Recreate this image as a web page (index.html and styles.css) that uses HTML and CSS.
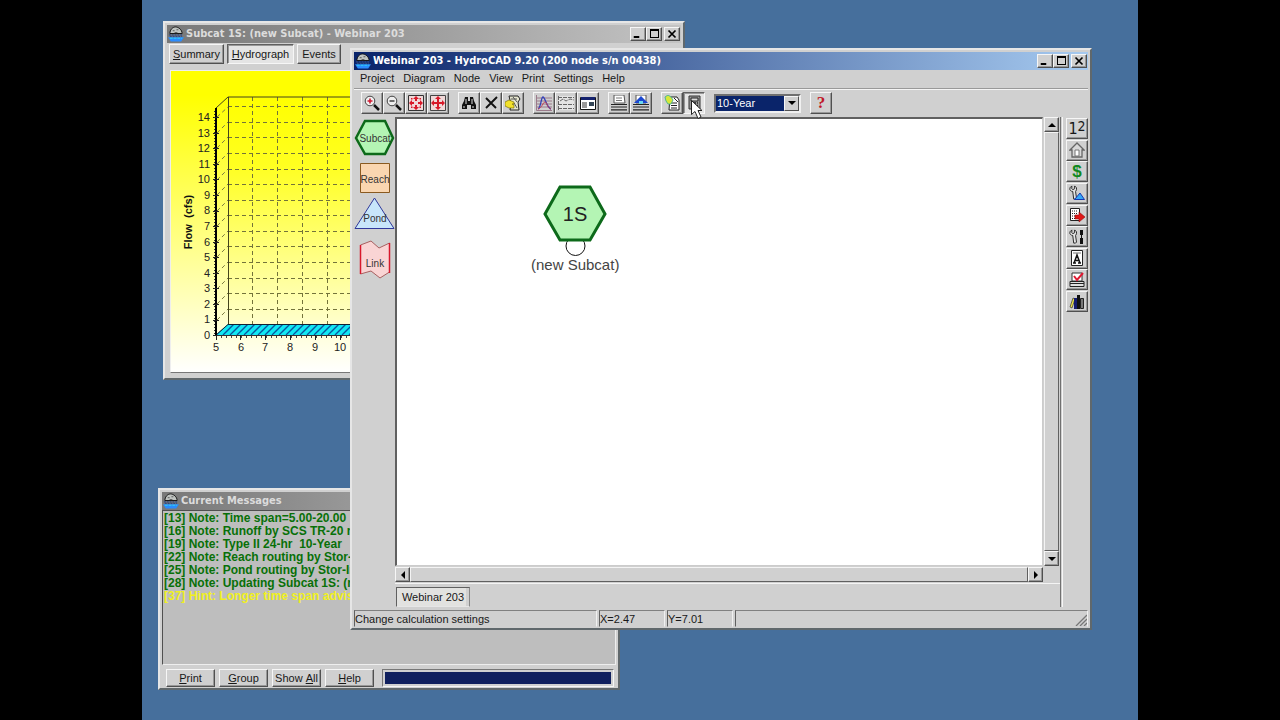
FILE: index.html
```html
<!DOCTYPE html>
<html lang="en">
<head>
<meta charset="utf-8">
<title>Webinar 203 - HydroCAD 9.20</title>
<link rel="stylesheet" href="styles.css">
</head>
<body>
<svg class="defs" aria-hidden="true">
  <symbol id="bowl" viewBox="0 0 17 17">
    <path d="M2 8C2 4 5 1 8 1s7 3 7 7z" fill="#bfc3c0" stroke="#111"/>
    <path d="M5 5h2M9 4h2M7 7h3" stroke="#555"/>
    <path d="M1 9.500h15M2 11h13" stroke="#334a80" stroke-width="1.300" stroke-dasharray="2 1"/>
    <path d="M0 12h17l-3 4.500H3z" fill="#2b8cff"/>
    <path d="M2 13h13" stroke="#30d8f0" stroke-dasharray="3 1"/>
  </symbol>
  <symbol id="min" viewBox="0 0 12 10"><path d="M2 7.500h5v1h-5z" fill="#000" stroke="#000"/></symbol>
  <symbol id="max" viewBox="0 0 12 10"><path d="M2.500 1v8M10.500 1v8M2 8.500h9" stroke="#000" fill="none"/><path d="M2 0h9v2H2z"/></symbol>
  <symbol id="close" viewBox="0 0 12 10"><path d="M2.500 1.500l7 7M9.500 1.500l-7 7" stroke="#000" stroke-width="1.700"/></symbol>
  <symbol id="wrench" viewBox="0 0 16 16"><path d="M3 1L1 3v2l2 2h1l1 8h2l1-1-1-7 1-2V3L6 1v3L4 5 3 4z" fill="#e4e4e4" stroke="#222"/></symbol>
</svg>

<main class="desktop">

  <section class="window chart-window" aria-label="Subcat 1S">
    <header class="title inactive">
      <svg class="app-icon"><use href="#bowl"/></svg>
      <h2>Subcat 1S: (new Subcat) - Webinar 203</h2>
      <div class="winbtns">
        <button aria-label="Minimize"><svg><use href="#min"/></svg></button>
        <button aria-label="Maximize"><svg><use href="#max"/></svg></button>
        <button class="x" aria-label="Close"><svg><use href="#close"/></svg></button>
      </div>
    </header>
    <nav class="tabs">
      <button class="tab-summary"><u>S</u>ummary</button>
      <button class="tab-hydro pressed"><u>H</u>ydrograph</button>
      <button class="tab-events">Events</button>
    </nav>
    <div class="chart">
      <svg width="508" height="302" viewBox="0 0 508 302" role="img" aria-label="Hydrograph, flow in cfs">
        <defs>
          <linearGradient id="sun" x1="0" y1="0" x2="0" y2="1">
            <stop offset="0.080" stop-color="#ffff00"/><stop offset="1" stop-color="#ffffff"/>
          </linearGradient>
          <linearGradient id="wall" x1="0" y1="0" x2="0" y2="1">
            <stop offset="0" stop-color="#ffff00"/><stop offset="0.300" stop-color="#ffff20"/><stop offset="1" stop-color="#ffffcc"/>
          </linearGradient>
          <pattern id="hatch" width="7" height="11" patternUnits="userSpaceOnUse" patternTransform="translate(0 253)">
            <path d="M-4 11L7 0M3 11L14 0M-11 11L0 0" stroke="#0757a0" stroke-width="1.300"/>
          </pattern>
        </defs>
        <rect width="508" height="302" fill="url(#sun)"/>
        <path d="M57 26H500V253H57z" fill="url(#wall)"/>
        <path d="M45 264L57 253H500V264z" fill="#10e8f4"/>
        <path d="M45 264L57 253H500V264z" fill="url(#hatch)"/>
        <path d="M57 35.500H500M57 51.500H500M57 66.500H500M57 82.500H500M57 98.500H500M57 113.500H500M57 129.500H500M57 144.500H500M57 160.500H500M57 175.500H500M57 191.500H500M57 207.500H500M57 222.500H500M57 238.500H500M81.500 26V253M106.500 26V253M131.500 26V253M156.500 26V253" stroke="#73733a" stroke-dasharray="4 3"/>
        <path d="M46 46l11-10M46 62l11-11M46 77l11-11M46 93l11-11M46 109l11-11M46 124l11-11M46 140l11-11M46 155l11-11M46 171l11-11M46 186l11-11M46 202l11-11M46 218l11-11M46 233l11-11M46 249l11-11" stroke="#7c7c40" stroke-dasharray="4 3"/>
        <path d="M45 37L57 26H500M57.500 26V253" fill="none" stroke="#44441c"/>
        <path d="M45 264L57 253.500H500" fill="none" stroke="#123"/>
        <path d="M45 264.500H500" stroke="#333"/>
        <path d="M45 37V265" stroke="#000" stroke-width="2"/>
        <path d="M42 46.500h6M42 62.500h6M42 77.500h6M42 93.500h6M42 108.500h6M42 124.500h6M42 140.500h6M42 155.500h6M42 171.500h6M42 186.500h6M42 202.500h6M42 217.500h6M42 233.500h6M42 249.500h6M42 264.500h4" stroke="#222"/>
        <path d="M43.500 40V264" stroke="#333" stroke-dasharray="1 2"/>
        <path d="M50 266H500" stroke="#444" stroke-width="2" stroke-dasharray="1 4"/>
        <path d="M45.500 264v5M69.500 264v5M94.500 264v5M119.500 264v5M144.500 264v5M169.500 264v5" stroke="#222"/>
        <g class="ticks" text-anchor="end">
          <text x="39" y="50">14</text><text x="39" y="66">13</text><text x="39" y="81">12</text><text x="39" y="97">11</text><text x="39" y="112">10</text><text x="39" y="128">9</text><text x="39" y="143">8</text><text x="39" y="159">7</text><text x="39" y="175">6</text><text x="39" y="190">5</text><text x="39" y="206">4</text><text x="39" y="221">3</text><text x="39" y="237">2</text><text x="39" y="252">1</text><text x="39" y="268">0</text>
        </g>
        <g class="ticks" text-anchor="middle">
          <text x="45" y="280">5</text><text x="70" y="280">6</text><text x="94" y="280">7</text><text x="119" y="280">8</text><text x="144" y="280">9</text><text x="169" y="280">10</text>
        </g>
        <text class="axis" text-anchor="middle" transform="translate(21 151) rotate(-90)">Flow&#160; (cfs)</text>
      </svg>
    </div>
  </section>

  <section class="window messages-window" aria-label="Current Messages">
    <header class="title inactive">
      <svg class="app-icon"><use href="#bowl"/></svg>
      <h2>Current Messages</h2>
    </header>
    <ul class="messages">
      <li>[13] Note: Time span=5.00-20.00</li>
      <li>[16] Note: Runoff by SCS TR-20 m</li>
      <li>[19] Note: Type II 24-hr&#160; 10-Year</li>
      <li>[22] Note: Reach routing by Stor-In</li>
      <li>[25] Note: Pond routing by Stor-In</li>
      <li>[28] Note: Updating Subcat 1S: (n</li>
      <li class="hint">[37] Hint: Longer time span adviso</li>
    </ul>
    <footer class="msg-actions">
      <button><u>P</u>rint</button>
      <button><u>G</u>roup</button>
      <button>Show&#160;<u>A</u>ll</button>
      <button><u>H</u>elp</button>
      <progress value="1" max="1" aria-label="Progress"></progress>
    </footer>
  </section>

  <section class="window app-window" aria-label="HydroCAD">
    <header class="title active">
      <svg class="app-icon"><use href="#bowl"/></svg>
      <h1>Webinar 203 - HydroCAD 9.20 (200 node s/n 00438)</h1>
      <div class="winbtns">
        <button aria-label="Minimize"><svg><use href="#min"/></svg></button>
        <button aria-label="Maximize"><svg><use href="#max"/></svg></button>
        <button class="x" aria-label="Close"><svg><use href="#close"/></svg></button>
      </div>
    </header>
    <nav class="menu">
      <button>Project</button><button>Diagram</button><button>Node</button><button>View</button><button>Print</button><button>Settings</button><button>Help</button>
    </nav>
    <div class="toolbar">
      <div class="group">
        <button aria-label="Zoom in"><svg viewBox="0 0 16 16"><path d="M10 10l5 5" stroke="#111" stroke-width="2.500"/><circle cx="6" cy="6" r="4.800" fill="#eee" stroke="#444"/><path d="M3.500 6h5M6 3.500v5" stroke="#d01830" stroke-width="1.600"/></svg></button>
        <button aria-label="Zoom out"><svg viewBox="0 0 16 16"><path d="M10 10l5 5" stroke="#111" stroke-width="2.500"/><circle cx="6" cy="6" r="4.800" fill="#eee" stroke="#444"/><path d="M3.500 6h5" stroke="#333" stroke-width="1.400"/></svg></button>
        <button aria-label="Fit diagram"><svg viewBox="0 0 16 16"><path d="M.5.5h15v15H.5z" fill="#f0d8d8" stroke="#333"/><path d="M8 1l3 3H9v2H7V4H5zM8 15l3-3H9v-2H7v2H5zM1 8l3-3v2h2v2H4v2zM15 8l-3-3v2h-2v2h2v2z" fill="#d81828"/><path d="M3 3h1.500v1.500H3zM11.500 3H13v1.500h-1.500zM3 11.500h1.500V13H3zM11.500 11.500H13V13h-1.500z" fill="#d81828"/></svg></button>
        <button aria-label="Pan diagram"><svg viewBox="0 0 16 16"><path d="M.5.5h15v15H.5z" fill="#f0d8d8" stroke="#444"/><path d="M8 1l3 3H9v3h3V5l3 3-3 3V9H9v3h2l-3 3-3-3h2V9H4v2L1 8l3-3v2h3V4H5z" fill="#d81828"/></svg></button>
      </div>
      <div class="group">
        <button aria-label="Find"><svg viewBox="0 0 16 16"><path d="M4 2h3v4h2V2h3l1 4 2 4v4h-5v-4H6v4H1v-4l2-4z" fill="#111"/><path d="M5 4v5M11 4v5M3 11v2M12 11v2" stroke="#ddd"/></svg></button>
        <button aria-label="Delete"><svg viewBox="0 0 16 16"><path d="M3 3l10 10M14 2L3 13" stroke="#111" stroke-width="1.900"/></svg></button>
        <button aria-label="Edit"><svg viewBox="0 0 16 16"><path d="M4 1h9l2 3-2 3 1 8H5l1-6z" fill="#e6e6d0" stroke="#222"/><path d="M6 4h6M9 8l3 5M8 2l4 5" stroke="#555"/><path d="M0 7l4-2 5 2v2H7l2 1v3H4L0 11z" fill="#f2e12c" stroke="#665c00" stroke-width=".6"/></svg></button>
      </div>
      <div class="group">
        <button aria-label="Hydrograph"><svg viewBox="0 0 16 16"><path d="M.5 0v15.500H16M1 3h15M1 6h15M1 9h15M1 12h15" fill="none" stroke="#9a7a8a"/><path d="M2 14C5 13 5 2 7 2s4 11 8 12" fill="none" stroke="#3340b8" stroke-width="1.300"/><path d="M2 14c4-1 5-7 7-7s2 6 6 7" fill="none" stroke="#c04058"/></svg></button>
        <button aria-label="Table"><svg viewBox="0 0 16 16"><path d="M0 1h16v14H0z" fill="#e4e4e4"/><path d="M.5 1v14M0 2.500h16M0 9.500h16M0 13.500h16M2 6l3-2 3 2 4-2 4 1" fill="none" stroke="#666" stroke-dasharray="4 1"/></svg></button>
        <button aria-label="Report window"><svg viewBox="0 0 16 16"><path d="M.5 2.500h15v12H.5z" fill="#fff" stroke="#111"/><path d="M1 2h14v3H1z" fill="#15226e"/><path d="M2 8h5M2 10h5M2 12h5" stroke="#333"/><path d="M9 7h5v4H9z" fill="#345"/></svg></button>
      </div>
      <div class="group">
        <button aria-label="Print"><svg viewBox="0 0 16 16"><path d="M3 0h10l1 8H3z" fill="#fff" stroke="#555"/><path d="M5 3h6M5 5.500h6" stroke="#777"/><path d="M0 9.500h16M0 12h16M0 14.800h16" stroke="#222" stroke-width="1.200"/></svg></button>
        <button aria-label="Print diagram"><svg viewBox="0 0 16 16"><path d="M3 0h10v8H3z" fill="#fff" stroke="#555"/><path d="M1 8l7-7 7 7z" fill="#1c48d0"/><path d="M6 6h4v3H6z" fill="#6cd8f0"/><path d="M0 9.500h16M0 12h16M0 14.800h16" stroke="#222" stroke-width="1.200"/></svg></button>
      </div>
      <div class="group">
        <button aria-label="Project notes"><svg viewBox="0 0 16 16"><path d="M6 2h7l2 3v10H5z" fill="#fff" stroke="#222"/><path d="M7 8h6M7 10.500h6M7 13h6M10 3l4 4" stroke="#222"/><path d="M1 2l3-2 3 2 2 3-2 4H4L2 6z" fill="#d8e838" stroke="#50b890"/></svg></button>
        <button class="pressed" aria-label="Calculation settings"><svg viewBox="0 0 16 16"><path d="M3 1h11v13H3z" fill="#999" stroke="#333"/><path d="M5 3h7v3H5z" fill="#ddd" stroke="#222"/><path d="M5 8h7M5 10.500h7M5 13h7" stroke="#222" stroke-width="1.500" stroke-dasharray="2 1"/></svg></button>
      </div>
      <div class="combo">
        <select aria-label="Storm event"><option>10-Year</option></select>
        <span class="combo-arrow"><i class="tri down"></i></span>
      </div>
      <button class="help" aria-label="Help">?</button>
    </div>
    <div class="workspace">
      <div class="palette">
        <button aria-label="Subcat"><svg width="41" height="42" viewBox="0 0 41 42"><path d="M2 21L11 4H31L39 21L31 37H11z" fill="#b4f5b4" stroke="#0d6a1a" stroke-width="2.500"/><text x="21" y="25">Subcat</text></svg></button>
        <button aria-label="Reach"><svg width="41" height="38" viewBox="0 0 41 38"><path d="M6.500 4.500h29v29h-29z" fill="#fad6b0" stroke="#8a5a20"/><text x="21" y="24">Reach</text></svg></button>
        <button aria-label="Pond"><svg width="41" height="34" viewBox="0 0 41 34"><path d="M20.500 1L40 31.500H1z" fill="#c8e6fa" stroke="#30389a"/><text x="21" y="25">Pond</text></svg></button>
        <button aria-label="Link"><svg width="41" height="50" viewBox="0 0 41 50"><path d="M6.500 14L17 10l8 7 10.500-5v29L26 47l-9-7-10.500 3z" fill="#f9d4d4" stroke="#a86060"/><path d="M6.500 14v29M35.500 12v30" stroke="#d8182c" stroke-width="1.500"/><text x="21" y="36">Link</text></svg></button>
      </div>
      <div class="diagram">
        <div class="canvas">
          <div class="node">
            <svg width="64" height="72" viewBox="0 0 64 72"><circle cx="32.500" cy="61" r="9.500" fill="#fff" stroke="#111"/><path d="M2 29L17 2H47L62 29L47 55H17z" fill="#b4f5b4" stroke="#0d6a1a" stroke-width="3"/><text x="32" y="36">1S</text></svg>
            <span>(new Subcat)</span>
          </div>
        </div>
        <div class="scroll vertical">
          <button aria-label="Scroll up"><i class="tri up"></i></button><div class="thumb"></div><button aria-label="Scroll down"><i class="tri down"></i></button>
        </div>
        <div class="scroll horizontal">
          <button aria-label="Scroll left"><i class="tri left"></i></button><div class="thumb"></div><button aria-label="Scroll right"><i class="tri right"></i></button>
        </div>
        <div class="doc-tabs"><button>Webinar 203</button></div>
      </div>
      <div class="sidebar">
        <div class="side-tools">
          <button aria-label="Numbering" class="number">1<sup>2</sup></button>
          <button aria-label="Home"><svg viewBox="0 0 16 16"><path d="M8 1L1 8h2v7h10V8h2z" fill="#d8d8d8" stroke="#666" stroke-width="1.300"/><path d="M6 8h4v6H6z" fill="#fff" stroke="#777"/></svg></button>
          <button aria-label="Cost" class="dollar">$</button>
          <button aria-label="Pond tools"><svg viewBox="0 0 16 16"><use href="#wrench" x="0" y="0" width="15" height="15"/><path d="M5.500 14.500L11 8l4.500 6.500z" fill="#35a8f8" stroke="#1838b0"/></svg></button>
          <button aria-label="Export"><svg viewBox="0 0 16 16"><path d="M1.500 1.500h9v12h-9z" fill="#fff" stroke="#222"/><path d="M3 4h6M3 6.500h6M3 9h4M3 11.500h4" stroke="#222" stroke-dasharray="1 1"/><path d="M6 8h4V5l6 5-6 5v-3H6z" fill="#e01818" stroke="#901010" stroke-width=".6"/></svg></button>
          <button aria-label="Tools"><svg viewBox="0 0 16 16"><use href="#wrench" x="0" y="0" width="15" height="15"/><path d="M11 1h3v5h-1v3h1v6h-3V9h1V6h-1z" fill="#111"/></svg></button>
          <button aria-label="Text"><svg viewBox="0 0 16 16"><path d="M2.500 .5h11v15h-11z" fill="#fff" stroke="#222"/><path d="M4 3h8" stroke="#777"/><path d="M5 13l3-8 3 8M6 10.500h4M4 13h3M9 13h3" fill="none" stroke="#111" stroke-width="1.500"/></svg></button>
          <button aria-label="Check print"><svg viewBox="0 0 16 16"><path d="M3 1h10v8H3z" fill="#fff" stroke="#333"/><path d="M1 9.500h14v5H1zM1 11.500h14" fill="#e0e0e0" stroke="#222"/><path d="M5 4l3 4 6-7" fill="none" stroke="#e01830" stroke-width="2"/></svg></button>
          <button aria-label="Library"><svg viewBox="0 0 16 16"><path d="M1 13L4 4l2 1-3 9z" fill="#e8e048" stroke="#333" stroke-width=".7"/><path d="M5 4h3v11H5z" fill="#141c70"/><path d="M8 1h3v14H8z" fill="#111"/><path d="M11.500 4.500h3v10h-3z" fill="#777" stroke="#222"/></svg></button>
        </div>
      </div>
    </div>
    <footer class="status">
      <span>Change calculation settings</span><span>X=2.47</span><span>Y=7.01</span><span class="last"><svg width="12" height="12" viewBox="0 0 12 12"><path d="M1 12L12 1M5 12l7-7M9 12l3-3" stroke="#777" stroke-width="1.300"/></svg></span>
    </footer>
  </section>

  <svg class="cursor" width="14" height="22" viewBox="0 0 14 22" aria-hidden="true"><path d="M1.500 1.500v14l3.500-3 3 7 3-1.500-3-6.500h4z" fill="#fff" stroke="#222"/></svg>
</main>
</body>
</html>
```

FILE: styles.css
```css
* { box-sizing: border-box; }

body {
  margin: 0;
  padding: 0 142px;
  min-height: 100vh;
  display: flex;
  background: #000;
  color: #181818;
  font: 11px/14px "Liberation Sans", Arial, sans-serif;
}

h1, h2, ul { margin: 0; padding: 0; font-size: inherit; }

button {
  font: inherit;
  color: inherit;
  padding: 0;
  border: 1px solid;
  border-color: #f6f6f6 #505050 #505050 #f6f6f6;
  box-shadow: inset -1px -1px #989898;
  background: #d0d0d0;
  display: flex;
  align-items: center;
  justify-content: center;
  white-space: nowrap;
}

button.pressed {
  border-color: #606060 #f6f6f6 #f6f6f6 #606060;
  box-shadow: inset 1px 1px #989898;
  background: #e4e4e4;
}

.defs { position: absolute; width: 0; height: 0; }

.desktop {
  position: relative;
  flex: 1;
  overflow: hidden;
  background: #466f9c;
}

/* Windows */
.window {
  position: absolute;
  display: flex;
  flex-direction: column;
  padding: 2px;
  border: 2px solid;
  border-color: #e6e6e6 #60686c #60686c #e6e6e6;
  background: #d0d0d0;
}

.chart-window { left: 21px; right: 453px; top: 21px; height: 359px; }
.messages-window { left: 16px; right: 518px; bottom: 30px; height: 202px; padding-bottom: 1px; }
.app-window { left: 208px; right: 46px; top: 48px; bottom: 90px; padding-bottom: 1px; }

.title {
  display: flex;
  align-items: center;
  gap: 2px;
  height: 18px;
  flex: none;
  padding: 0 1px;
  font: bold 11px/14px "DejaVu Sans Condensed", "DejaVu Sans", sans-serif;
}

.title.active { background: linear-gradient(90deg, #0a246a, #a6caf0); color: #fff; }
.title.inactive { background: linear-gradient(90deg, #787878, #c4c4c4); color: #dcdcdc; }
.title h1, .title h2 { flex: 1; white-space: nowrap; overflow: hidden; }
.app-icon { width: 16px; height: 16px; flex: none; }

.winbtns { display: flex; }
.winbtns button { width: 16px; height: 14px; }
.winbtns .x { margin-left: 2px; }
.winbtns svg { width: 12px; height: 10px; }

/* Hydrograph window */
.tabs { display: flex; gap: 3px; padding: 1px 2px 0; height: 22px; flex: none; }
.tabs button { height: 20px; }
.tab-summary { width: 55px; }
.tab-hydro { width: 67px; }
.tab-events { width: 44px; }
.chart { flex: 1; margin: 5px 2px 3px 3px; border: 1px solid; border-color: #eee #777 #777 #eee; overflow: hidden; }
.chart svg { display: block; }
.ticks { font: 11px "Liberation Sans", sans-serif; fill: #222; }
.axis { font: bold 11px "Liberation Sans", sans-serif; fill: #111; }

/* Messages window */
.messages {
  flex: 1;
  list-style: none;
  padding: 1px 0 0 1px;
  border: 1px solid;
  border-color: #505050 #eee #eee #505050;
  background: #bebebe;
  color: #087008;
  font: bold 12px/13px "Liberation Sans", sans-serif;
  white-space: nowrap;
  overflow: hidden;
}
.messages .hint { color: #f0f020; }
.msg-actions { display: flex; gap: 4px; padding: 4px 2px 0 4px; height: 22px; flex: none; }
.msg-actions button { width: 49px; height: 18px; }
.msg-actions progress {
  appearance: none;
  flex: 1;
  height: 18px;
  margin-left: 4px;
  padding: 2px;
  border: 1px solid;
  border-color: #777 #f6f6f6 #f6f6f6 #777;
  background: #d0d0d0;
}
progress::-webkit-progress-bar { background: #d0d0d0; }
progress::-webkit-progress-value { background: #10205e; }

/* Menu and toolbar */
.menu { display: flex; gap: 9px; padding: 0 6px; height: 19px; flex: none; border-bottom: 1px solid #999; box-shadow: 0 1px #f4f4f4; }
.menu button { border: 0; box-shadow: none; height: 16px; }

.toolbar { display: flex; align-items: center; gap: 9px; height: 28px; flex: none; padding: 0 7px; }
.group { display: flex; }
.group button, .help { width: 22px; height: 22px; }
.group svg, .side-tools svg { width: 16px; height: 16px; }
.help { color: #c01828; font: bold 17px/18px "Liberation Serif", serif; }

.combo { position: relative; width: 87px; height: 19px; }
.combo select {
  appearance: none;
  width: 100%;
  height: 100%;
  padding: 0 18px 0 1px;
  border: 2px solid;
  border-color: #707070 #f0f0f0 #f0f0f0 #707070;
  border-radius: 0;
  background: #0a246a;
  color: #fff;
  font: inherit;
}
.combo-arrow {
  position: absolute;
  top: 2px;
  right: 2px;
  width: 15px;
  height: 15px;
  display: flex;
  align-items: center;
  justify-content: center;
  background: #d0d0d0;
  border: 1px solid;
  border-color: #f6f6f6 #505050 #505050 #f6f6f6;
  pointer-events: none;
}

.tri { border: 4px solid transparent; }
.tri.up { border-bottom-color: #000; border-top: 0; }
.tri.down { border-top-color: #000; border-bottom: 0; }
.tri.left { border-right-color: #000; border-left: 0; }
.tri.right { border-left-color: #000; border-right: 0; }

/* Workspace */
.workspace { flex: 1; display: flex; min-height: 0; }
.palette { width: 41px; flex: none; }
.palette button { border: 0; box-shadow: none; }
.palette text { font: 10px "Liberation Sans", sans-serif; fill: #333; text-anchor: middle; }

.diagram {
  flex: 1;
  display: grid;
  grid-template-columns: 1fr 17px;
  grid-template-rows: 1fr 17px 24px;
  border-right: 1px solid #707070;
}
.canvas {
  position: relative;
  overflow: hidden;
  background: #fff;
  border: solid #606060;
  border-width: 2px 1px 1px 2px;
  border-right-color: #ccc;
  border-bottom-color: #ccc;
}
.node {
  position: absolute;
  left: 134px;
  top: 66px;
  display: flex;
  flex-direction: column;
  align-items: center;
  color: #444;
  font: 15px/16px "Liberation Sans", sans-serif;
}
.node text { font: 20px "Liberation Sans", sans-serif; fill: #222; text-anchor: middle; }

.scroll { display: flex; background: #d0d0d0; }
.scroll button { flex: none; width: 15px; height: 15px; }
.scroll .thumb { flex: 1; border: 1px solid; border-color: #f4f4f4 #606060 #606060 #f4f4f4; }
.vertical { flex-direction: column; padding: 0 1px; }
.horizontal { grid-column: 1; padding: 1px 0; }
.doc-tabs { grid-column: 1 / -1; border-top: 1px solid #f4f4f4; padding: 3px 0 0 1px; }
.doc-tabs button {
  width: 74px;
  height: 20px;
  background: #e2e2e0;
  border-color: #606060 #888 #e6e6e6 #606060;
  box-shadow: inset -3px 0 #d0d0d0;
}

.sidebar { flex: none; width: 26px; margin-left: 1px; padding: 1px 0 0 3px; border-left: 1px solid #f6f6f6; }
.side-tools { display: flex; flex-direction: column; justify-content: space-between; height: 194px; }
.side-tools button { width: 22px; height: 21px; }
.number { font: 16px/18px "DejaVu Sans Condensed", sans-serif; }
.number sup { font-size: 14px; line-height: 8px; align-self: flex-start; padding-top: 3px; }
.side-tools .dollar { color: #108820; font: bold 17px/18px "Liberation Sans", sans-serif; }

/* Status bar */
.status { display: flex; gap: 2px; flex: none; height: 17px; margin-top: 3px; }
.status span { width: 66px; padding: 1px 0 0; border: 1px solid; border-color: #808080 #f0f0f0 #d0d0d0 #606060; }
.status span:first-child { width: 243px; }
.status .last { flex: 1; width: auto; display: flex; justify-content: flex-end; align-items: flex-end; }

.cursor { position: absolute; left: 548px; top: 99px; }
```
